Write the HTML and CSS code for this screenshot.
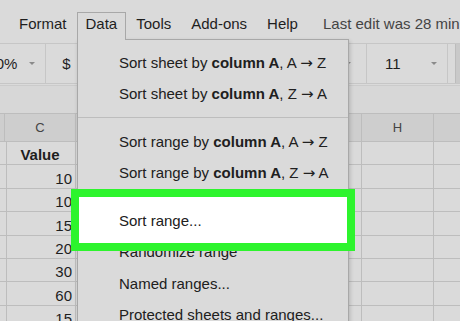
FILE: index.html
```html
<!DOCTYPE html>
<html>
	<head>
		<meta charset="UTF-8">
		<title>Data menu</title>
		<link rel="stylesheet" href="styles.css">
	</head>
	<body>
		<div class="menubar">
			<span class="menu">Format</span>
			<span class="menu tab">Data</span>
			<span class="menu">Tools</span>
			<span class="menu">Add-ons</span>
			<span class="menu">Help</span>
			<span class="last-edit">Last edit was 28 minutes ago</span>
		</div>

		<div class="toolbar">
			<div class="btn zoom">100%<i class="caret"></i></div>
			<div class="btn w42">$</div>
			<div class="btn w30">%</div>
			<div class="btn w32">.0</div>
			<div class="btn w34">.00</div>
			<div class="btn w52">123<i class="caret"></i></div>
			<div class="btn font">Arial<i class="caret"></i></div>
			<div class="btn size">11<i class="caret"></i></div>
			<div class="btn bold">B</div>
			<div class="btn w31">I</div>
		</div>

		<div class="formula"></div>

		<div class="grid">
			<div class="cell head"></div><div class="cell head">C</div><div class="cell head">D</div><div class="cell head">E</div><div class="cell head">F</div><div class="cell head">G</div><div class="cell head">H</div><div class="cell head">I</div>
			<div class="cell"></div><div class="cell label">Value</div><div class="cell"></div><div class="cell"></div><div class="cell"></div><div class="cell"></div><div class="cell"></div><div class="cell"></div>
			<div class="cell"></div><div class="cell num">10</div><div class="cell"></div><div class="cell"></div><div class="cell"></div><div class="cell"></div><div class="cell"></div><div class="cell"></div>
			<div class="cell"></div><div class="cell num">10</div><div class="cell"></div><div class="cell"></div><div class="cell"></div><div class="cell"></div><div class="cell"></div><div class="cell"></div>
			<div class="cell"></div><div class="cell num">15</div><div class="cell"></div><div class="cell"></div><div class="cell"></div><div class="cell"></div><div class="cell"></div><div class="cell"></div>
			<div class="cell"></div><div class="cell num">20</div><div class="cell"></div><div class="cell"></div><div class="cell"></div><div class="cell"></div><div class="cell"></div><div class="cell"></div>
			<div class="cell"></div><div class="cell num">30</div><div class="cell"></div><div class="cell"></div><div class="cell"></div><div class="cell"></div><div class="cell"></div><div class="cell"></div>
			<div class="cell"></div><div class="cell num">60</div><div class="cell"></div><div class="cell"></div><div class="cell"></div><div class="cell"></div><div class="cell"></div><div class="cell"></div>
			<div class="cell"></div><div class="cell num">15</div><div class="cell"></div><div class="cell"></div><div class="cell"></div><div class="cell"></div><div class="cell"></div><div class="cell"></div>
		</div>

		<ul class="dropdown">
			<li class="item">Sort sheet by <b>column A</b>, A <span class="arr">&rarr;</span> Z</li>
			<li class="item">Sort sheet by <b>column A</b>, Z <span class="arr">&rarr;</span> A</li>
			<li class="sep"></li>
			<li class="item">Sort range by <b>column A</b>, A <span class="arr">&rarr;</span> Z</li>
			<li class="item">Sort range by <b>column A</b>, Z <span class="arr">&rarr;</span> A</li>
			<li class="sep"></li>
			<li class="item hl">Sort range...</li>
			<li class="item">Randomize range</li>
			<li class="item">Named ranges...</li>
			<li class="item">Protected sheets and ranges...</li>
			<li class="item">Data validation...</li>
		</ul>
	</body>
</html>
```

FILE: styles.css
```css
body, html {
	margin: 0;
	padding: 0;
	width: 460px;
	height: 321px;
	overflow: hidden;
	background: #dadada;
	color: #1e1e1e;
	font-family: "Liberation Sans", Arial, sans-serif;
	font-size: 15px;
}
body { position: relative; }

/* menu bar */
.menubar {
	display: flex;
	align-items: flex-start;
	height: 43px;
	box-sizing: border-box;
	padding: 13px 0 0 9px;
	line-height: 22px;
	white-space: nowrap;
}
.menu { padding: 0 10px; }
.tab {
	position: relative;
	z-index: 3;
	margin-top: -1px;
	padding: 0 8px 5px;
	border: 1px solid #a8a8a8;
	border-bottom: none;
	background: #dadada;
}
.last-edit {
	margin-left: 15px;
	color: #444;
}

/* toolbar */
.toolbar {
	display: flex;
	height: 41px;
	box-sizing: border-box;
	border-top: 1px solid #c6c6c6;
	border-bottom: 1px solid #c6c6c6;
	white-space: nowrap;
}
.btn {
	display: flex;
	align-items: center;
	justify-content: center;
	flex: none;
	box-sizing: border-box;
	border-right: 1px solid #c6c6c6;
}
.zoom {
	width: 86px;
	margin-left: -40px;
	justify-content: flex-start;
	padding-left: 19px;
}
.zoom .caret { margin-left: 12px; }
.w30 { width: 30px; }
.w31 { width: 31px; }
.w32 { width: 32px; }
.w34 { width: 34px; }
.w42 { width: 42px; }
.w52 { width: 52px; }
.font {
	width: 131px;
	justify-content: space-between;
	padding: 0 15px 0 12px;
}
.size {
	width: 81px;
	justify-content: space-between;
	padding: 0 10px 0 18px;
}
.bold {
	width: 31px;
	margin-left: 7px;
	border-left: 1px solid #bcbcbc;
	background: #c9c9c9;
	font-weight: bold;
}
.caret {
	width: 0;
	height: 0;
	border-left: 3px solid transparent;
	border-right: 3px solid transparent;
	border-top: 3px solid #8a8a8a;
}

/* formula bar */
.formula {
	margin-top: 1px;
	height: 27px;
	border-top: 1px solid #cbcbcb;
	background: #d7d7d7;
}

/* sheet */
.grid {
	display: grid;
	grid-template-columns: 5px 71px 72px 72px 71px 71px 72px 80px;
	grid-template-rows: 28px;
	grid-auto-rows: 23.4px;
	border-top: 1px solid #bdbdbd;
}
.cell {
	display: flex;
	align-items: flex-end;
	box-sizing: border-box;
	padding: 0 3px 1px;
	border-right: 1px solid #bdbdbd;
	border-bottom: 1px solid #bdbdbd;
	line-height: 17px;
	overflow: hidden;
}
.cell.head {
	align-items: center;
	justify-content: center;
	padding: 0;
	background: #cecece;
	color: #444;
	font-size: 13px;
}
.label {
	justify-content: center;
	font-weight: bold;
}
.num { justify-content: flex-end; }

/* data menu */
.dropdown {
	position: absolute;
	z-index: 2;
	left: 77px;
	top: 39px;
	width: 270px;
	height: 320px;
	margin: 0;
	padding: 6.5px 0 0;
	list-style: none;
	background: #dadada;
	border: 1px solid #a8a8a8;
	box-shadow: 1px 2px 4px rgba(0, 0, 0, .18);
}
.item {
	padding-left: 41px;
	line-height: 31.5px;
	white-space: nowrap;
	color: #202020;
}
.arr {
	font-family: "DejaVu Sans", sans-serif;
	line-height: 0;
}
.sep {
	margin: 7.5px 0;
	border-top: 1px solid #bdbdbd;
}
.item.hl {
	position: relative;
	z-index: 1;
}
.item.hl::before {
	content: '';
	position: absolute;
	z-index: -1;
	left: -7px;
	right: -7px;
	top: -15.5px;
	bottom: -15px;
	background: #fff;
	border: 8.5px solid #2df42d;
}
```
